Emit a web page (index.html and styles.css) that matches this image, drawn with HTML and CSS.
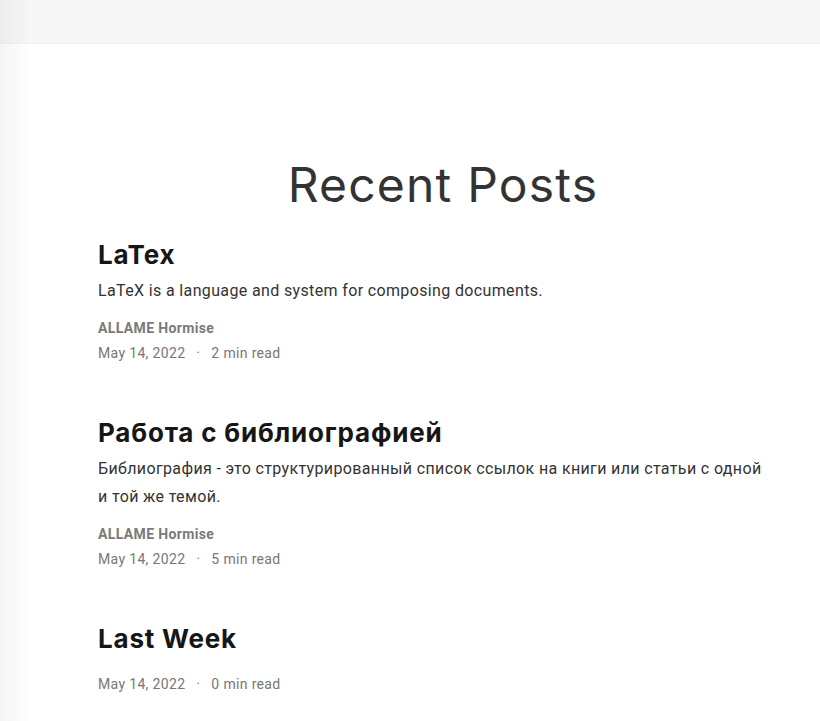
FILE: index.html
```html
<!DOCTYPE html>
<html lang="en">
<head>
<meta charset="utf-8">
<title>Recent Posts</title>
<link rel="stylesheet" href="styles.css">
</head>
<body>
<div class="page">
  <header class="topbar"></header>
  <main class="content">
    <h1 class="section-title">Recent Posts</h1>
    <article class="post">
      <h2 class="post-title">LaTex</h2>
      <p class="post-excerpt">LaTeX is a language and system for composing documents.</p>
      <div class="post-author">ALLAME Hormise</div>
      <div class="post-meta"><span>May 14, 2022</span><span class="sep">·</span><span>2 min read</span></div>
    </article>
    <article class="post">
      <h2 class="post-title">Работа с библиографией</h2>
      <p class="post-excerpt">Библиография - это структурированный список ссылок на книги или статьи с одной и той же темой.</p>
      <div class="post-author">ALLAME Hormise</div>
      <div class="post-meta"><span>May 14, 2022</span><span class="sep">·</span><span>5 min read</span></div>
    </article>
    <article class="post">
      <h2 class="post-title post-title--solo">Last Week</h2>
      <div class="post-meta"><span>May 14, 2022</span><span class="sep">·</span><span>0 min read</span></div>
    </article>
  </main>
</div>
</body>
</html>
```
FILE: styles.css
```css
html, body {
  margin: 0;
  padding: 0;
  background: #ffffff;
}
body {
  font-family: Roboto, "Liberation Sans", sans-serif;
  overflow: hidden;
}
.page {
  position: relative;
  min-height: 721px;
}
.page::before {
  content: "";
  position: absolute;
  left: 0;
  top: 0;
  bottom: 0;
  width: 32px;
  background: linear-gradient(to right, rgba(0,0,0,0.045), rgba(0,0,0,0));
  pointer-events: none;
}
.topbar {
  height: 43px;
  background: #f7f7f7;
  border-bottom: 1px solid #f2f2f2;
}
.content {
  padding: 112px 32px 0 98px;
}
.section-title {
  margin: 0 0 25px;
  text-align: center;
  font-family: Inter, "Open Sans", sans-serif;
  font-weight: 400;
  font-size: 48px;
  line-height: 58px;
  color: #333333;
  letter-spacing: 1.2px;
}
.post {
  margin-bottom: 51px;
}
.post-title {
  margin: 0 0 6px;
  font-family: Inter, "Open Sans", sans-serif;
  font-weight: 700;
  font-size: 26px;
  line-height: 32px;
  letter-spacing: 0.8px;
  color: #161616;
}
.post-title--solo {
  margin-bottom: 17px;
}
.post-excerpt {
  margin: 0 0 11px;
  max-width: 675px;
  font-size: 16px;
  line-height: 28px;
  letter-spacing: 0.36px;
  color: #333333;
}
.post-author {
  font-size: 14px;
  line-height: 25px;
  font-weight: 700;
  letter-spacing: 0.36px;
  color: #7a7a7a;
}
.post-meta {
  display: flex;
  font-size: 14px;
  line-height: 25px;
  letter-spacing: 0.34px;
  color: #777777;
}
.sep {
  margin: 0 11px 0 11px;
}
```
